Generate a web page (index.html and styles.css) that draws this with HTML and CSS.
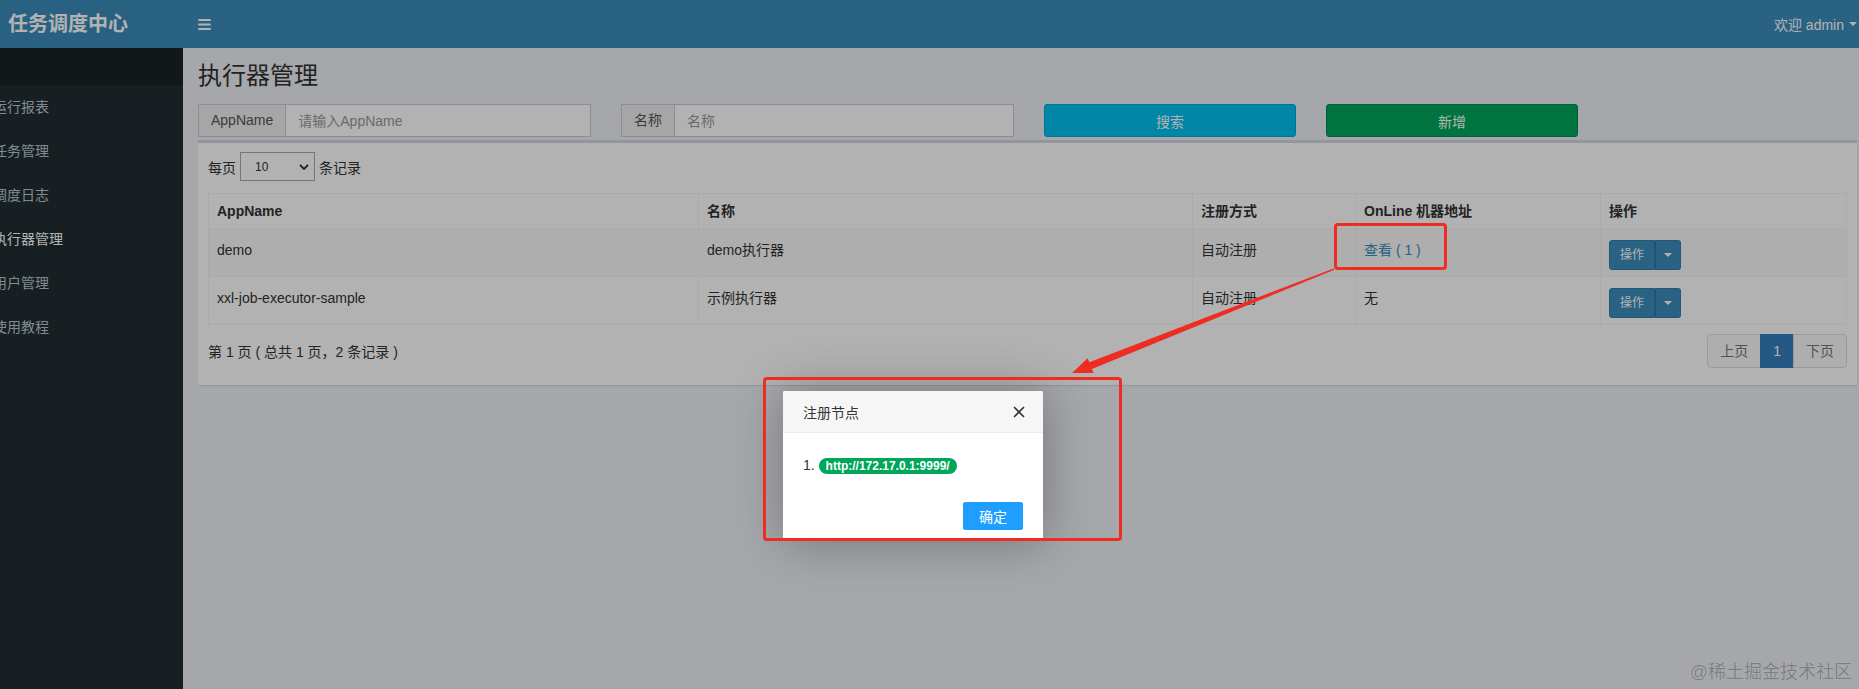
FILE: index.html
```html
<!DOCTYPE html>
<html lang="zh-CN">
<head>
<meta charset="utf-8">
<title>执行器管理</title>
<link rel="stylesheet" href="styles.css">
</head>
<body>
<div class="app">
  <div class="logo">任务调度中心</div>
  <nav class="navbar">
    <span class="toggle">
      <svg width="13" height="11" viewBox="0 0 13 11"><rect x="0" y="0" width="13" height="2" rx="1" fill="#fff"/><rect x="0" y="4.5" width="13" height="2" rx="1" fill="#fff"/><rect x="0" y="9" width="13" height="2" rx="1" fill="#fff"/></svg>
    </span>
    <div class="user">欢迎 admin <span class="caret"></span></div>
  </nav>
  <aside class="sidebar">
    <div class="side-head"></div>
    <ul class="menu">
      <li><span>运行报表</span></li>
      <li><span>任务管理</span></li>
      <li><span>调度日志</span></li>
      <li class="active"><span>执行器管理</span></li>
      <li><span>用户管理</span></li>
      <li><span>使用教程</span></li>
    </ul>
  </aside>
  <main class="content">
    <h1 class="page-title">执行器管理</h1>
    <div class="filters">
      <div class="input-group"><span class="addon">AppName</span><input class="input" placeholder="请输入AppName"></div>
      <div class="input-group"><span class="addon">名称</span><input class="input" placeholder="名称"></div>
      <button class="btn-block btn-info">搜索</button>
      <button class="btn-block btn-success">新增</button>
    </div>
    <section class="box">
      <div class="length">每页 <span class="select"><span>10</span><svg width="10" height="6" viewBox="0 0 10 6"><polyline points="1,1 5,5 9,1" fill="none" stroke="#333" stroke-width="1.8"/></svg></span> 条记录</div>
      <table class="table">
        <colgroup><col class="c-app"><col class="c-name"><col class="c-reg"><col class="c-online"><col class="c-op"></colgroup>
        <thead>
          <tr><th>AppName</th><th>名称</th><th>注册方式</th><th>OnLine 机器地址</th><th>操作</th></tr>
        </thead>
        <tbody>
          <tr>
            <td>demo</td><td>demo执行器</td><td>自动注册</td><td><a class="link">查看 ( 1 )</a></td>
            <td><span class="btn-group"><span class="btn-op">操作</span><span class="btn-caret"><span class="caret"></span></span></span></td>
          </tr>
          <tr>
            <td>xxl-job-executor-sample</td><td>示例执行器</td><td>自动注册</td><td>无</td>
            <td><span class="btn-group"><span class="btn-op">操作</span><span class="btn-caret"><span class="caret"></span></span></span></td>
          </tr>
        </tbody>
      </table>
      <div class="footer">
        <span>第 1 页 ( 总共 1 页，2 条记录 )</span>
        <ul class="pagination">
          <li><a>上页</a></li>
          <li class="active"><a>1</a></li>
          <li><a>下页</a></li>
        </ul>
      </div>
    </section>
  </main>
</div>

<div class="mask"></div>

<div class="layer">
  <div class="layer-title">
    <span>注册节点</span>
    <svg width="12" height="12" viewBox="0 0 12 12"><path d="M1 1 L11 11 M11 1 L1 11" stroke="#333" stroke-width="1.6" fill="none"/></svg>
  </div>
  <div class="layer-content">1. <span class="badge">http://172.17.0.1:9999/</span></div>
  <div class="layer-btns"><button class="btn-ok">确定</button></div>
</div>

<div class="mark mark-link"></div>
<div class="mark mark-modal"></div>
<svg class="arrow" width="1859" height="689" viewBox="0 0 1859 689">
  <polygon points="1072,373 1093.5,373 1091.9,368.9 1334.3,269.7 1333.7,268.4 1089.3,362.3 1087.6,358.2" fill="#ee2c22"/>
</svg>
<div class="watermark">@稀土掘金技术社区</div>
</body>
</html>
```

FILE: styles.css
```css
* { box-sizing: border-box; }
html, body { margin: 0; }
body {
  position: relative;
  width: 1859px;
  height: 689px;
  overflow: hidden;
  font-family: "Liberation Sans", "Noto Sans CJK SC", sans-serif;
  font-size: 14px;
  color: #333;
  background: #ecf0f5;
}
.app {
  display: grid;
  grid-template-columns: 183px 1fr;
  grid-template-rows: 48px 1fr;
  height: 689px;
}
.logo {
  background: #3b8bba;
  color: #fff;
  font-size: 20px;
  font-weight: 700;
  line-height: 48px;
  padding-left: 8px;
  white-space: nowrap;
}
.navbar {
  background: #3c8dbc;
  color: #fff;
  display: flex;
  align-items: center;
  justify-content: space-between;
  padding: 0 2px 0 15px;
}
.toggle { display: flex; }
.user { display: flex; align-items: center; gap: 5px; }
.caret {
  display: inline-block;
  width: 0;
  height: 0;
  border-left: 4px solid transparent;
  border-right: 4px solid transparent;
  border-top: 4px solid #fff;
}
.sidebar { background: #222d32; }
.side-head { height: 37px; background: #1a2226; }
.menu { list-style: none; margin: 0; padding: 0; }
.menu li {
  height: 44px;
  padding: 12px 0;
  line-height: 20px;
  color: #b8c7ce;
  white-space: nowrap;
  overflow: hidden;
}
.menu li span { margin-left: -7px; }
.menu li.active { color: #fff; background: #202b30; }

.content { padding: 15px 2px 0 15px; min-width: 0; }
.page-title {
  margin: 0;
  font-size: 24px;
  line-height: 26px;
  font-weight: 400;
  color: #333;
}
.filters {
  display: grid;
  grid-template-columns: 393px 393px 252px 252px;
  column-gap: 30px;
  margin-top: 15px;
  height: 33px;
}
.input-group { display: flex; height: 33px; }
.addon {
  padding: 0 12px;
  background: #eee;
  border: 1px solid #ccc;
  border-right: 0;
  line-height: 31px;
  color: #555;
}
.input {
  flex: 1;
  min-width: 0;
  height: 33px;
  border: 1px solid #ccc;
  background: #fff;
  padding: 0 12px;
  font: inherit;
  color: #555;
  outline: none;
}
.input::placeholder { color: #999; }
.btn-block {
  height: 33px;
  border-radius: 3px;
  border: 1px solid;
  color: #fff;
  font: inherit;
}
.btn-info { background: #00c0ef; border-color: #00acd6; }
.btn-success { background: #00a65a; border-color: #008d4c; }

.box {
  margin-top: 3px;
  background: #fff;
  border-top: 3px solid #d2d6de;
  box-shadow: 0 1px 1px rgba(0, 0, 0, .1);
  padding: 9px 10px 17px;
}
.length { display: flex; align-items: center; gap: 4px; height: 29px; }
.select {
  width: 75px;
  height: 29px;
  border: 1px solid #aaa;
  display: flex;
  align-items: center;
  justify-content: space-between;
  padding: 0 5px 0 14px;
  font-size: 12px;
}
.table {
  width: 100%;
  table-layout: fixed;
  border-collapse: collapse;
  margin-top: 12px;
}
.c-app { width: 490px; }
.c-name { width: 494px; }
.c-reg { width: 163px; }
.c-online { width: 245px; }
.table th, .table td {
  border: 1px solid #f4f4f4;
  text-align: left;
  padding: 8px;
}
.table th { line-height: 18px; font-weight: 700; }
.table td { padding: 11px 8px 6px; line-height: 20px; vertical-align: top; }
.table tbody tr:nth-child(odd) { background: #f9f9f9; }
.link { color: #3c8dbc; }
.btn-group { display: inline-flex; vertical-align: top; }
.btn-op {
  background: #3c8dbc;
  border: 1px solid #367fa9;
  color: #fff;
  font-size: 12px;
  line-height: 18px;
  padding: 5px 10px;
  border-radius: 3px 0 0 3px;
}
.btn-caret {
  background: #3c8dbc;
  border: 1px solid #367fa9;
  border-left-color: #2f7199;
  padding: 0 8px;
  display: flex;
  align-items: center;
  border-radius: 0 3px 3px 0;
}
.footer {
  display: flex;
  justify-content: space-between;
  align-items: center;
  margin-top: 9px;
}
.pagination { display: flex; list-style: none; margin: 0; padding: 0; }
.pagination a {
  display: block;
  padding: 6px 12px;
  line-height: 20px;
  border: 1px solid #ddd;
  background: #fafafa;
  color: #777;
  margin-left: -1px;
}
.pagination li:first-child a { border-radius: 4px 0 0 4px; margin-left: 0; }
.pagination li:last-child a { border-radius: 0 4px 4px 0; }
.pagination .active a { background: #3480c0; border-color: #3480c0; color: #fff; }

.mask {
  position: absolute;
  inset: 0;
  background: rgba(0, 0, 0, .3);
}
.layer {
  position: absolute;
  left: 783px;
  top: 391px;
  width: 260px;
  background: #fff;
  border-radius: 2px;
  box-shadow: 1px 1px 50px rgba(0, 0, 0, .3);
}
.layer-title {
  height: 42px;
  display: flex;
  align-items: center;
  justify-content: space-between;
  padding: 0 18px 0 20px;
  background: #f6f6f6;
  border-bottom: 1px solid #eee;
  border-radius: 2px 2px 0 0;
  color: #333;
}
.layer-content { padding: 20px; line-height: 24px; color: #333; }
.badge {
  display: inline-block;
  vertical-align: middle;
  background: #00a65a;
  color: #fff;
  font-weight: 700;
  font-size: 12px;
  line-height: 12px;
  padding: 2px 7px;
  border-radius: 8px;
}
.layer-btns { display: flex; justify-content: flex-end; padding: 5px 20px 11px; }
.btn-ok {
  width: 60px;
  height: 28px;
  background: #1e9fff;
  border: 1px solid #1e9fff;
  border-radius: 2px;
  color: #fff;
  font: inherit;
}
.mark {
  position: absolute;
  border: 3px solid #ee2c22;
  border-radius: 4px;
}
.mark-link { left: 1334px; top: 223px; width: 113px; height: 47px; }
.mark-modal { left: 763px; top: 377px; width: 359px; height: 164px; }
.arrow { position: absolute; left: 0; top: 0; pointer-events: none; }
.watermark {
  position: absolute;
  right: 7px;
  top: 661px;
  font-size: 18px;
  line-height: 22px;
  color: #7c8085;
  text-shadow: 0 0 1px rgba(255, 255, 255, .35);
}
```
